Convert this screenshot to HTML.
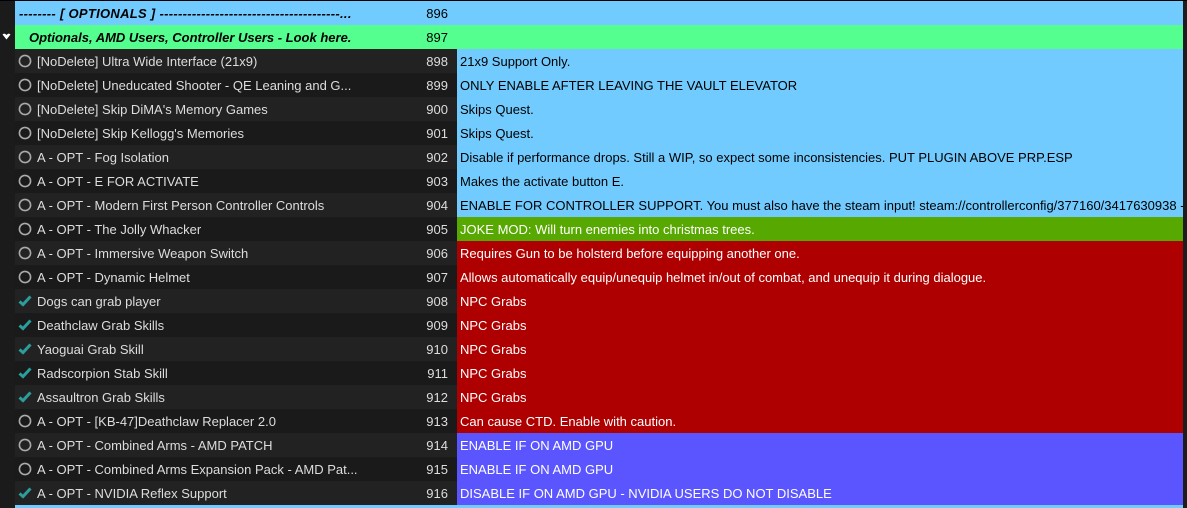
<!DOCTYPE html>
<html><head><style>
body{margin:0;width:1187px;height:508px;background:#1b1b1b;overflow:hidden;font-family:"Liberation Sans",sans-serif;font-size:13px;position:relative}
.r{position:absolute;left:15px;width:1168px;height:24px;line-height:26px}
.n{position:absolute;left:0;width:433px;text-align:right;color:#ddd}
.nm{position:absolute;left:22px;color:#ddd;white-space:nowrap}
.c{position:absolute;left:442px;right:0;top:0;bottom:0;padding-left:3px;white-space:nowrap;overflow:hidden}
.ic{position:absolute;left:3px;top:5px}
.lb{background:#72cbff;color:#000}.rd{background:#ae0000;color:#fff}.pu{background:#5a55ff;color:#fff}.ol{background:#57a800;color:#fff}
.h .n{color:#000}
</style></head><body>
<div style="position:absolute;left:1183px;top:0;width:4px;height:508px;background:#1d1d1d"></div>
<div style="position:absolute;left:0;top:0;width:1187px;height:1px;background:#000"></div>
<div class="r h" style="top:1px;background:#72cbff"><span class="nm" style="left:4px;color:#000;font-weight:bold;font-style:italic;font-size:13px;letter-spacing:0.3px">-------- [ OPTIONALS ] ---------------------------------------...</span><span class="n">896</span></div>
<div class="r h" style="top:25px;background:#55ff8f"><span class="nm" style="left:14px;color:#000;font-weight:bold;font-style:italic">Optionals, AMD Users, Controller Users - Look here.</span><span class="n">897</span></div>
<svg style="position:absolute;left:2px;top:33px" width="9" height="8"><path d="M0.5 1.5 Q2.5 -0.5 4.5 2 Q6.5 -0.5 8.5 1.5 L4.5 6.5Z" fill="#fff"/></svg>
<div style="position:absolute;left:0;top:49px;width:1187px">
<div id="rows"></div>
</div>
<div style="position:absolute;left:15px;top:505px;width:1168px;height:3px;background:#72cbff"></div>
<script>
var O='<svg class="ic" width="14" height="14"><circle cx="7" cy="7" r="5.6" fill="none" stroke="#aaa" stroke-width="1.6"/></svg>';
var K='<svg class="ic" width="14" height="14"><path d="M1.5 7.5 L5 10.5 L12.5 2.5" fill="none" stroke="#2a9d9d" stroke-width="3"/></svg>';
var d=[
[O,"[NoDelete] Ultra Wide Interface (21x9)",898,"lb","21x9 Support Only."],
[O,"[NoDelete] Uneducated Shooter - QE Leaning and G...",899,"lb","ONLY ENABLE AFTER LEAVING THE VAULT ELEVATOR"],
[O,"[NoDelete] Skip DiMA's Memory Games",900,"lb","Skips Quest."],
[O,"[NoDelete] Skip Kellogg's Memories",901,"lb","Skips Quest."],
[O,"A - OPT - Fog Isolation",902,"lb","Disable if performance drops. Still a WIP, so expect some inconsistencies. PUT PLUGIN ABOVE PRP.ESP"],
[O,"A - OPT - E FOR ACTIVATE",903,"lb","Makes the activate button E."],
[O,"A - OPT - Modern First Person Controller Controls",904,"lb","ENABLE FOR CONTROLLER SUPPORT. You must also have the steam input! steam://controllerconfig/377160/3417630938 -..."],
[O,"A - OPT - The Jolly Whacker",905,"ol","JOKE MOD: Will turn enemies into christmas trees."],
[O,"A - OPT - Immersive Weapon Switch",906,"rd","Requires Gun to be holsterd before equipping another one."],
[O,"A - OPT - Dynamic Helmet",907,"rd","Allows automatically equip/unequip helmet in/out of combat, and unequip it during dialogue."],
[K,"Dogs can grab player",908,"rd","NPC Grabs"],
[K,"Deathclaw Grab Skills",909,"rd","NPC Grabs"],
[K,"Yaoguai Grab Skill",910,"rd","NPC Grabs"],
[K,"Radscorpion Stab Skill",911,"rd","NPC Grabs"],
[K,"Assaultron Grab Skills",912,"rd","NPC Grabs"],
[O,"A - OPT - [KB-47]Deathclaw Replacer 2.0",913,"rd","Can cause CTD. Enable with caution."],
[O,"A - OPT - Combined Arms - AMD PATCH",914,"pu","ENABLE IF ON AMD GPU"],
[O,"A - OPT - Combined Arms Expansion Pack - AMD Pat...",915,"pu","ENABLE IF ON AMD GPU"],
[K,"A - OPT - NVIDIA Reflex Support",916,"pu","DISABLE IF ON AMD GPU - NVIDIA USERS DO NOT DISABLE"]];
var h='';
d.forEach(function(x,i){h+='<div class="r" style="top:'+(i*24)+'px;background:'+(i%2?'#1a1a1a':'#222')+'">'+x[0]+'<span class="nm">'+x[1]+'</span><span class="n">'+x[2]+'</span><div class="c '+x[3]+'">'+x[4]+'</div></div>';});
document.getElementById('rows').innerHTML=h;
</script>
</body></html>
